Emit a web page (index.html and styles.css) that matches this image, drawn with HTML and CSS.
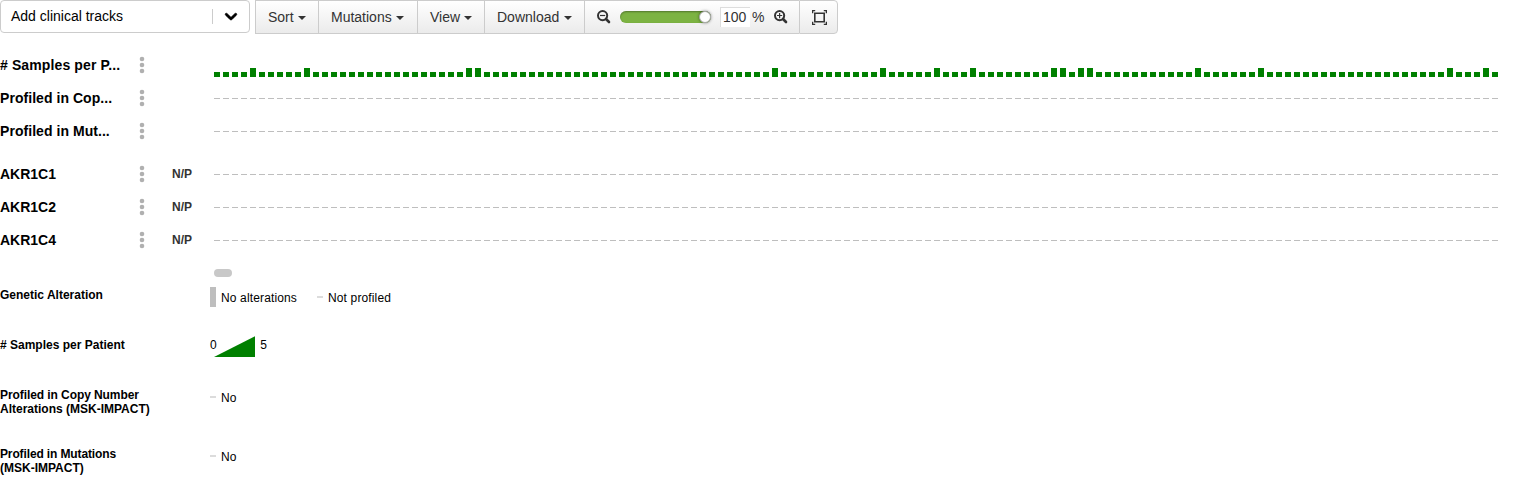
FILE: index.html
```html
<!DOCTYPE html>
<html lang="en">
<head>
<meta charset="utf-8">
<title>OncoPrint</title>
<link rel="stylesheet" href="styles.css">
</head>
<body>
<svg class="defs" width="0" height="0" aria-hidden="true">
  <symbol id="dots" viewBox="0 0 6 18"><circle cx="3" cy="3" r="2.3"/><circle cx="3" cy="9" r="2.3"/><circle cx="3" cy="15" r="2.3"/></symbol>
  <symbol id="dashes" viewBox="0 0 1284 33"><path d="M0 16.5H1284" stroke="#bebebe" stroke-dasharray="6 3"/></symbol>
  <symbol id="lens" viewBox="0 0 14 14"><circle cx="5.6" cy="5.6" r="4.6" fill="none" stroke="#333" stroke-width="2"/><path d="M9 9L12 12" stroke="#333" stroke-width="2.6" stroke-linecap="round"/></symbol>
</svg>

<div class="toolbar">
  <div class="select">
    <span class="select-text">Add clinical tracks</span>
    <span class="select-sep"></span>
    <svg class="select-arrow" width="20" height="20" viewBox="0 0 20 20"><path stroke="#000" stroke-width=".6" d="M4.516 7.548c.436-.446 1.043-.481 1.576 0L10 11.295l3.908-3.747c.533-.481 1.141-.446 1.574 0 .436.445.408 1.197 0 1.615-.406.418-4.695 4.502-4.695 4.502a1.095 1.095 0 0 1-1.576 0S4.924 9.581 4.516 9.163s-.436-1.17 0-1.615z"/></svg>
  </div>
  <div class="buttons">
    <div class="btn sort">Sort<i class="caret"></i></div>
    <div class="btn mutations">Mutations<i class="caret"></i></div>
    <div class="btn view">View<i class="caret"></i></div>
    <div class="btn download">Download<i class="caret"></i></div>
    <div class="btn zoom">
      <svg width="14" height="14"><use href="#lens"/><path d="M3 5.5H8.2" stroke="#333" stroke-width="1.2"/></svg>
      <span class="slider"><span class="knob"></span></span>
      <span class="percent">100</span><span class="unit">%</span>
      <svg width="14" height="14"><use href="#lens"/><path d="M3 5.5H8.2M5.6 3V8.2" stroke="#333" stroke-width="1.2"/></svg>
    </div>
    <div class="btn fit">
      <svg width="15" height="15" viewBox="0 0 15 15" fill="none" stroke="#333"><path d="M2.8 3.2H12.2V11.8H2.8Z" stroke-width="1.6"/><path d="M.6 3.2V.6H3.2M11.8.6H14.4V3.2M14.4 11.8V14.4H11.8M3.2 14.4H.6V11.8" stroke-width="1.4"/></svg>
    </div>
  </div>
</div>

<div class="tracks">
  <div class="track">
    <span class="name wide"># Samples per P...</span><svg class="menu"><use href="#dots"/></svg><span class="info"></span>
    <svg class="cells" viewBox="0 0 1284 33">
      <path d="M0 25.5H1284" stroke="#008000" stroke-width="5" stroke-dasharray="6 3"/>
      <path fill="#008000" d="M36 19h6v9h-6zM90 19h6v9h-6zM252 19h6v9h-6zM261 19h6v9h-6zM558 19h6v9h-6zM666 19h6v9h-6zM720 19h6v9h-6zM756 19h6v9h-6zM837 19h6v9h-6zM846 19h6v9h-6zM864 19h6v9h-6zM873 19h6v9h-6zM981 19h6v9h-6zM1044 19h6v9h-6zM1233 19h6v9h-6zM1269 19h6v9h-6z"/>
    </svg>
  </div>
  <div class="track"><span class="name clinical">Profiled in Cop...</span><svg class="menu"><use href="#dots"/></svg><span class="info"></span><svg class="cells"><use href="#dashes"/></svg></div>
  <div class="track"><span class="name clinical">Profiled in Mut...</span><svg class="menu"><use href="#dots"/></svg><span class="info"></span><svg class="cells"><use href="#dashes"/></svg></div>
</div>
<div class="tracks genes">
  <div class="track"><span class="name">AKR1C1</span><svg class="menu"><use href="#dots"/></svg><span class="info">N/P</span><svg class="cells"><use href="#dashes"/></svg></div>
  <div class="track"><span class="name">AKR1C2</span><svg class="menu"><use href="#dots"/></svg><span class="info">N/P</span><svg class="cells"><use href="#dashes"/></svg></div>
  <div class="track"><span class="name">AKR1C4</span><svg class="menu"><use href="#dots"/></svg><span class="info">N/P</span><svg class="cells"><use href="#dashes"/></svg></div>
</div>
<div class="scroll-thumb"></div>

<div class="legend">
  <div class="legend-row">
    <div class="legend-title">Genetic Alteration</div>
    <div class="legend-item first"><span class="swatch-full"></span><span class="legend-text">No alterations</span></div>
    <div class="legend-item"><span class="swatch-dash"></span><span class="legend-text">Not profiled</span></div>
  </div>
  <div class="legend-row">
    <div class="legend-title"># Samples per Patient</div>
    <div class="legend-range"><span class="low">0</span><svg width="41" height="21" viewBox="0 0 41 21"><path d="M0 20.9L41 .3V20.9Z" fill="#008000"/></svg><span class="high">5</span></div>
  </div>
  <div class="legend-row tall">
    <div class="legend-title"><span class="tight">Profiled in Copy Number</span><br>Alterations (MSK-IMPACT)</div>
    <div class="legend-item"><span class="swatch-dash"></span><span class="legend-text">No</span></div>
  </div>
  <div class="legend-row">
    <div class="legend-title"><span class="tighter">Profiled in Mutations</span><br>(MSK-IMPACT)</div>
    <div class="legend-item"><span class="swatch-dash"></span><span class="legend-text">No</span></div>
  </div>
</div>
</body>
</html>
```

FILE: styles.css
```css
* { box-sizing: border-box; }
body {
  margin: 0;
  background: #fff;
  font-family: "Liberation Sans", Arial, sans-serif;
  font-size: 14px;
  color: #000;
  overflow: hidden;
}
svg { display: block; flex: none; }
.defs { display: none; }

.toolbar { display: flex; gap: 5px; height: 34px; }
.select {
  display: flex;
  align-items: center;
  width: 250px;
  height: 33px;
  padding-left: 10px;
  border: 1px solid #ccc;
  border-radius: 4px;
}
.select-text { width: 201px; padding-bottom: 1px; }
.select-sep { width: 1px; height: 15px; background: #ccc; }
.select-arrow { margin: 0 0 1px 8px; }

.buttons { display: flex; }
.btn {
  display: flex;
  align-items: center;
  height: 34px;
  padding-left: 12px;
  border: 1px solid #ccc;
  border-right: 0;
  background: linear-gradient(#fff, #ebebeb);
  color: #333;
}
.caret {
  margin: 2px 0 0 4.3px;
  border: 4px solid transparent;
  border-top-color: #333;
  border-bottom: 0;
}
.sort { width: 63px; }
.mutations { width: 99px; }
.view { width: 67px; }
.download { width: 100px; }
.zoom { width: 215px; }
.fit { width: 39px; border-right: 1px solid #ccc; border-radius: 0 4px 4px 0; }
.slider {
  display: flex;
  align-items: center;
  justify-content: flex-end;
  width: 91px;
  height: 12px;
  margin-left: 9px;
  border-radius: 6px;
  background: #7cb342;
  box-shadow: inset 0 1px 2px rgba(0, 0, 0, .35);
}
.knob {
  width: 12px;
  height: 12px;
  border: 1px solid #aaa;
  border-radius: 50%;
  background: #fff;
  box-shadow: 0 0 3px rgba(0, 0, 0, .5);
}
.percent {
  width: 30px;
  height: 20px;
  margin-left: 9px;
  padding-left: 2px;
  border-top: 1px solid #ddd;
  border-left: 1px solid #ddd;
  background: #fff;
  line-height: 18px;
}
.unit { width: 24px; padding-left: 2px; }

.tracks { padding-top: 15px; }
.genes { padding-top: 10px; }
.track { display: flex; align-items: center; height: 33px; }
.name { width: 139px; padding-bottom: 2px; font-weight: bold; white-space: nowrap; }
.wide { letter-spacing: .12px; }
.clinical { letter-spacing: .05px; }
.menu { width: 6px; height: 18px; margin-bottom: 1px; fill: #b0b0b0; }
.info { width: 69px; padding: 0 0 2px 27px; font-size: 12px; font-weight: bold; color: #333; }
.cells { width: 1284px; height: 33px; }
.scroll-thumb {
  width: 18px;
  height: 8px;
  margin: 12px 0 0 214px;
  border-radius: 4px;
  background: #c8c8c8;
}

.legend { padding-top: 10px; font-size: 12px; line-height: 14px; }
.legend-row { display: flex; align-items: flex-start; height: 50px; }
.tall { height: 59px; }
.legend-title { width: 210px; padding-top: 1px; font-weight: bold; white-space: nowrap; }
.tight { letter-spacing: -.08px; }
.tighter { letter-spacing: -.13px; }
.legend-item { display: flex; gap: 5px; }
.first { width: 107px; }
.swatch-full { width: 6px; height: 20px; background: #bebebe; }
.swatch-dash { width: 6px; height: 2px; margin-top: 9px; background: #dcdcdc; }
.legend-text { padding-top: 4px; letter-spacing: .14px; }
.legend-range { display: flex; }
.legend-range svg { margin: -1px 0 0 -2.5px; }
.low { padding-top: 1px; }
.high { padding: 1px 0 0 5px; }
```
